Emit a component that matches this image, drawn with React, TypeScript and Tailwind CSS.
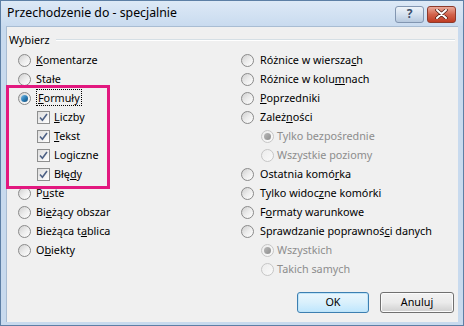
import type { ReactNode } from "react";

const font = { fontFamily: '"Noto Sans", "Open Sans", sans-serif' };

function Radio({ checked = false, disabled = false }: { checked?: boolean; disabled?: boolean }) {
  return (
    <span
      className={
        "flex h-[13px] w-[13px] shrink-0 items-center justify-center rounded-full border " +
        (disabled
          ? "border-[#c6c6c6] bg-linear-to-br from-[#ececec] to-[#fafafa]"
          : "border-[#8a8a8a] bg-linear-to-br from-[#cfcfcf] via-[#ececec] to-[#ffffff]")
      }
    >
      {checked && (
        <span
          className={
            "h-[7px] w-[7px] rounded-full " +
            (disabled
              ? "bg-linear-to-br from-[#b8b8b8] to-[#8e8e8e]"
              : "bg-linear-to-br from-[#7cc1e8] via-[#2d7fb8] to-[#154e7a]")
          }
        />
      )}
    </span>
  );
}

function Check() {
  return (
    <span className="flex h-[13px] w-[13px] shrink-0 items-center justify-center border border-[#8e8f8f] bg-linear-to-br from-[#dedede] to-[#ffffff]">
      <svg width="9" height="9" viewBox="0 0 9 9">
        <path d="M1 4.5 L3.4 7.2 L8 1" fill="none" stroke="#4d6185" strokeWidth="1.6" />
      </svg>
    </span>
  );
}

function Row({
  children,
  indent = 0,
  gap = 5,
  disabled = false,
  control,
}: {
  children: ReactNode;
  indent?: number;
  gap?: number;
  disabled?: boolean;
  control: ReactNode;
}) {
  return (
    <div
      className={"flex h-[19px] items-center " + (disabled ? "text-[#8d8d8d]" : "text-black")}
      style={{ paddingLeft: indent, columnGap: gap }}
    >
      {control}
      <span className="whitespace-nowrap leading-none">{children}</span>
    </div>
  );
}

export default function App() {
  return (
    <div
      className="relative flex h-[326px] w-[464px] flex-col overflow-hidden border border-[#5d7fa5] bg-[#c8daee] text-[10.8px]"
      style={font}
    >
      {/* title bar */}
      <div className="flex h-[25px] shrink-0 items-center bg-linear-to-b from-[#dde9f6] to-[#c9dbef] pl-[6px] pr-[7px]">
        <span className="text-[12.3px] text-black">Przechodzenie do - specjalnie</span>
        <div className="ml-auto flex items-center gap-[3px] pt-[1px]">
          <div className="flex h-[17px] w-[29px] items-center justify-center rounded-[3px] border border-[#8296b1] bg-linear-to-b from-[#eef3f9] via-[#d4e0ee] to-[#b7c9de] text-[12px] font-bold leading-none text-[#3c4f6a]">
            ?
          </div>
          <div className="flex h-[17px] w-[29px] items-center justify-center rounded-[3px] border border-[#8d3a2c] bg-linear-to-b from-[#e9a99a] via-[#d2634c] to-[#bf3b22]">
            <svg width="13" height="10" viewBox="0 0 13 10">
              <path d="M2 1 L11 9 M11 1 L2 9" stroke="#4a1b12" strokeWidth="3.4" strokeLinecap="round" />
              <path d="M2 1 L11 9 M11 1 L2 9" stroke="#ffffff" strokeWidth="2" strokeLinecap="round" />
            </svg>
          </div>
        </div>
      </div>

      {/* client area */}
      <div className="mx-[5px] mb-[3px] flex flex-1 flex-col border-l border-t border-[#a9bdd3] bg-[#f0f0f0]">
        <div className="mt-[5px] flex h-[16px] items-center pl-[2px] pr-[3px]">
          <span className="leading-none">Wybierz</span>
          <div className="ml-[6px] flex flex-1 flex-col">
            <div className="h-px bg-[#d5dfe5]" />
            <div className="h-px bg-white" />
          </div>
        </div>

        <div className="mt-[3px] flex">
          <div className="flex w-[234px] flex-col pl-[11px]">
            <Row control={<Radio />}>
              <u>K</u>omentarze
            </Row>
            <Row control={<Radio />}>Stałe</Row>
            <Row control={<Radio checked />}>
              <span className="border border-dotted border-black px-px">
                <u>F</u>ormuły
              </span>
            </Row>
            <Row indent={19} gap={4} control={<Check />}>
              <u>L</u>iczby
            </Row>
            <Row indent={19} gap={4} control={<Check />}>
              <u>T</u>ekst
            </Row>
            <Row indent={19} gap={4} control={<Check />}>
              Logiczne
            </Row>
            <Row indent={19} gap={4} control={<Check />}>
              Błę<u>d</u>y
            </Row>
            <Row control={<Radio />}>
              P<u>u</u>ste
            </Row>
            <Row control={<Radio />}>
              Bi<u>e</u>żący obszar
            </Row>
            <Row control={<Radio />}>
              Bieżąca t<u>a</u>blica
            </Row>
            <Row control={<Radio />}>
              O<u>b</u>iekty
            </Row>
          </div>

          <div className="flex flex-col">
            <Row gap={6} control={<Radio />}>
              Różnice w wiersza<u>c</u>h
            </Row>
            <Row gap={6} control={<Radio />}>
              Różnice w kolu<u>m</u>nach
            </Row>
            <Row gap={6} control={<Radio />}>
              <u>P</u>oprzedniki
            </Row>
            <Row gap={6} control={<Radio />}>
              Zależ<u>n</u>ości
            </Row>
            <Row indent={20} gap={3} disabled control={<Radio checked disabled />}>
              Tylko bezpośrednie
            </Row>
            <Row indent={20} gap={3} disabled control={<Radio disabled />}>
              Wszystkie poziomy
            </Row>
            <Row gap={6} control={<Radio />}>
              Ostatnia komó<u>r</u>ka
            </Row>
            <Row gap={6} control={<Radio />}>
              Tylko widoc<u>z</u>ne komórki
            </Row>
            <Row gap={6} control={<Radio />}>
              F<u>o</u>rmaty warunkowe
            </Row>
            <Row gap={6} control={<Radio />}>
              Sprawdzanie poprawnoś<u>c</u>i danych
            </Row>
            <Row indent={20} gap={3} disabled control={<Radio checked disabled />}>
              Wszystkich
            </Row>
            <Row indent={20} gap={3} disabled control={<Radio disabled />}>
              Takich samych
            </Row>
          </div>
        </div>

        <div className="mt-auto mb-[9px] flex justify-end gap-[11px] pr-[4px]">
          <button className="flex h-[21px] w-[72px] items-center justify-center rounded-[3px] border border-[#3c7fb1] bg-linear-to-b from-[#eaf6fd] via-[#d9f0fc] to-[#bee6fd] text-black shadow-[inset_0_0_0_1px_#bfe4f8]">
            OK
          </button>
          <button className="flex h-[21px] w-[74px] items-center justify-center rounded-[3px] border border-[#707070] bg-linear-to-b from-[#f2f2f2] via-[#ebebeb] to-[#cfcfcf] text-black shadow-[inset_0_0_0_1px_#fbfbfb]">
            Anuluj
          </button>
        </div>
      </div>

      {/* highlight annotation */}
      <div className="absolute left-[5px] top-[84px] h-[104px] w-[104px] border-[3px] border-[#e2187f]" />
    </div>
  );
}
